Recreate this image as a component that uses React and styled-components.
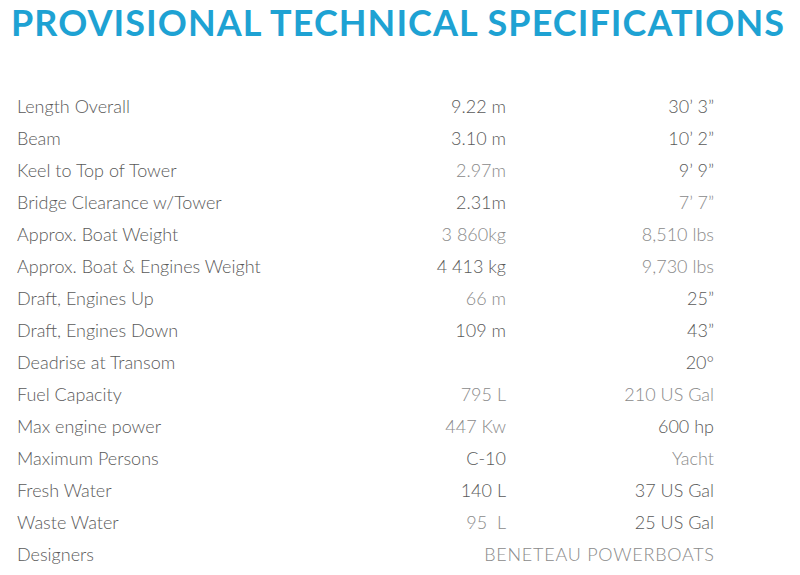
import React from "react";
import styled, { createGlobalStyle } from "styled-components";

const Global = createGlobalStyle`
  html, body { margin: 0; padding: 0; background: #fff; }
  body { font-family: Lato, "Liberation Sans", sans-serif; }
`;

const Page = styled.div`
  width: 800px;
  height: 575px;
  overflow: hidden;
  background: #fff;
`;

const Title = styled.h1`
  margin: 0;
  padding: 1px 0 0 11px;
  height: 90px;
  box-sizing: border-box;
  font-family: Lato, sans-serif;
  font-weight: 700;
  font-size: 36px;
  line-height: 42px;
  letter-spacing: 1.05px;
  color: #1ea2d3;
  white-space: nowrap;
`;

const Table = styled.div`
  display: grid;
  grid-template-columns: 319px 170px 208px;
  grid-auto-rows: 32px;
  padding-left: 17px;
`;

const Cell = styled.div`
  display: flex;
  align-items: center;
  justify-content: ${(p) => (p.$right ? "flex-end" : "flex-start")};
  font-family: Lato, sans-serif;
  font-weight: 300;
  font-size: 18px;
  color: ${(p) => (p.$light ? "#8a8a8a" : "#5a5a5a")};
  white-space: pre;
`;

const Span = styled(Cell)`
  grid-column: 2 / 4;
  letter-spacing: 0.75px;
  margin-right: -0.75px;
`;

const rows = [
  ["Length Overall", "9.22 m", 0, "30\u2019 3\u201d", 0],
  ["Beam", "3.10 m", 0, "10\u2019 2\u201d", 0],
  ["Keel to Top of Tower", "2.97m", 1, "9\u2019 9\u201d", 0],
  ["Bridge Clearance w/Tower", "2.31m", 0, "7\u2019 7\u201d", 1],
  ["Approx. Boat Weight", "3 860kg", 1, "8,510 lbs", 1],
  ["Approx. Boat & Engines Weight", "4 413 kg", 0, "9,730 lbs", 1],
  ["Draft, Engines Up", "66 m", 1, "25\u201d", 0],
  ["Draft, Engines Down", "109 m", 0, "43\u201d", 0],
  ["Deadrise at Transom", "", 0, "20\u00b0", 0],
  ["Fuel Capacity", "795 L", 1, "210 US Gal", 1],
  ["Max engine power", "447 Kw", 1, "600 hp", 0],
  ["Maximum Persons", "C-10", 0, "Yacht", 1],
  ["Fresh Water", "140 L", 0, "37 US Gal", 0],
  ["Waste Water", "95  L", 1, "25 US Gal", 0],
];

export default function App() {
  return (
    <Page>
      <Global />
      <Title>PROVISIONAL TECHNICAL SPECIFICATIONS</Title>
      <Table>
        {rows.map(([label, metric, ml, imp, il]) => (
          <React.Fragment key={label}>
            <Cell>{label}</Cell>
            <Cell $right $light={!!ml}>{metric}</Cell>
            <Cell $right $light={!!il}>{imp}</Cell>
          </React.Fragment>
        ))}
        <Cell>Designers</Cell>
        <Span $right $light>BENETEAU POWERBOATS</Span>
      </Table>
    </Page>
  );
}
